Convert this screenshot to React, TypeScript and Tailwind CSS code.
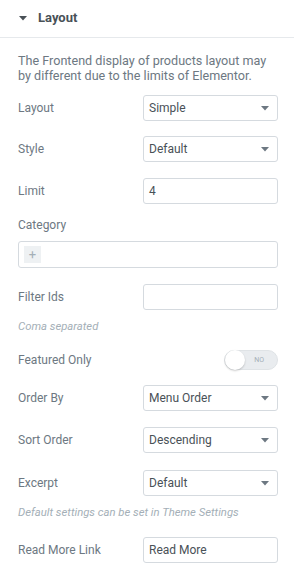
import React from "react";

const Caret = ({ className }: { className?: string }) => (
  <svg width="8" height="5" viewBox="0 0 8 5" className={className}>
    <path d="M0 0 L8 0 L4 4.5 Z" fill="currentColor" />
  </svg>
);

const Row = ({
  label,
  className,
  children,
}: {
  label: string;
  className?: string;
  children: React.ReactNode;
}) => (
  <div className={`flex items-center h-[26px] ${className ?? ""}`}>
    <span className="flex-1 text-[12px] text-[#6d7882]">{label}</span>
    {children}
  </div>
);

const SelectBox = ({ value }: { value: string }) => (
  <div className="w-[135px] h-[26px] border border-[#d5dadf] rounded-[3px] flex items-center justify-between pl-[5px] pr-[8px] text-[12px] text-[#495157]">
    <span>{value}</span>
    <Caret className="text-[#6d7882]" />
  </div>
);

const TextBox = ({ value }: { value?: string }) => (
  <div className="w-[135px] h-[26px] border border-[#d5dadf] rounded-[3px] flex items-center pl-[5px] text-[12px] text-[#495157]">
    {value}
  </div>
);

const App = () => {
  return (
    <div className="w-[294px] h-[577px] bg-white font-['Roboto',sans-serif] overflow-hidden">
      <div className="h-[38px] border-b border-[#e6e9ec] flex items-center pl-[19px] pb-[1px]">
        <Caret className="text-[#495157]" />
        <span className="ml-[11px] text-[13px] font-bold text-[#495157]">Layout</span>
      </div>
      <div className="pl-[18px] pr-[16px] pt-[15px] flex flex-col">
        <p className="text-[12.6px] leading-[15px] text-[#6d7882] whitespace-nowrap">
          The Frontend display of products layout may
          <br />
          by different due to the limits of Elementor.
        </p>
        <Row label="Layout" className="mt-[12px]">
          <SelectBox value="Simple" />
        </Row>
        <Row label="Style" className="mt-[15px]">
          <SelectBox value="Default" />
        </Row>
        <Row label="Limit" className="mt-[16px]">
          <TextBox value="4" />
        </Row>
        <span className="mt-[14px] text-[12px] leading-[14px] text-[#6d7882]">Category</span>
        <div className="mt-[9px] h-[27px] border border-[#d5dadf] rounded-[3px] flex items-center pl-[5px]">
          <div className="w-[17px] h-[17px] bg-[#eef1f3] flex items-center justify-center text-[13px] leading-none text-[#a4afb7]">
            +
          </div>
        </div>
        <Row label="Filter Ids" className="mt-[16px]">
          <TextBox />
        </Row>
        <span className="mt-[10px] text-[11.3px] leading-[14px] italic text-[#a4afb7]">Coma separated</span>
        <Row label="Featured Only" className="mt-[13px]">
          <div className="w-[54px] h-[20px] rounded-full bg-[#e9ecef] border border-[#dfe3e6] relative flex items-center justify-end pr-[13px]">
            <div className="absolute left-0 top-[-1px] w-[20px] h-[20px] rounded-full bg-white shadow-[0_1px_2px_rgba(0,0,0,0.2)]" />
            <span className="text-[7px] text-[#a4afb7]">NO</span>
          </div>
        </Row>
        <Row label="Order By" className="mt-[12px]">
          <SelectBox value="Menu Order" />
        </Row>
        <Row label="Sort Order" className="mt-[16px]">
          <SelectBox value="Descending" />
        </Row>
        <Row label="Excerpt" className="mt-[17px]">
          <SelectBox value="Default" />
        </Row>
        <span className="mt-[10px] text-[11.3px] leading-[14px] italic text-[#a4afb7]">
          Default settings can be set in Theme Settings
        </span>
        <Row label="Read More Link" className="mt-[17px]">
          <TextBox value="Read More" />
        </Row>
      </div>
    </div>
  );
};

export default App;
